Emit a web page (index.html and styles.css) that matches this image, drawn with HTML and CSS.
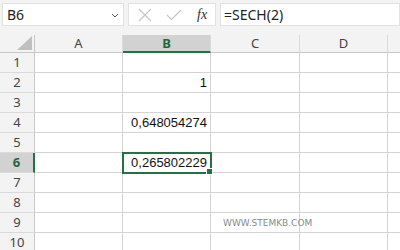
FILE: index.html
```html
<!DOCTYPE html>
<html lang="en">
<head>
    <meta charset="UTF-8">
    <title>SECH</title>
    <link rel="stylesheet" href="styles.css">
</head>
<body>
    <div class="formula-bar">
        <div class="name-box">
            <span>B6</span>
            <svg class="caret" width="8" height="5" viewBox="0 0 8 5"><path d="M1 1 L4 4 L7 1" fill="none" stroke="#555" stroke-width="1"/></svg>
        </div>
        <div class="fx-buttons">
            <svg width="14" height="14" viewBox="0 0 14 14"><path d="M1 1 L13 13 M13 1 L1 13" stroke="#c4c4c4" stroke-width="1.1" fill="none"/></svg>
            <svg width="16" height="12" viewBox="0 0 16 12"><path d="M1 6 L5.5 10.5 L15 1" stroke="#c4c4c4" stroke-width="1.1" fill="none"/></svg>
            <span class="fx">fx</span>
        </div>
        <div class="formula-input">=SECH(2)</div>
    </div>

    <div class="sheet">
        <div class="corner"><div class="tri"></div></div>
        <div class="col-head">A</div>
        <div class="col-head sel">B</div>
        <div class="col-head">C</div>
        <div class="col-head">D</div>
        <div class="col-head last"></div>

        <div class="row-head">1</div><div class="cell"></div><div class="cell"></div><div class="cell"></div><div class="cell"></div><div class="cell last"></div>
        <div class="row-head">2</div><div class="cell"></div><div class="cell num">1</div><div class="cell"></div><div class="cell"></div><div class="cell last"></div>
        <div class="row-head">3</div><div class="cell"></div><div class="cell"></div><div class="cell"></div><div class="cell"></div><div class="cell last"></div>
        <div class="row-head">4</div><div class="cell"></div><div class="cell num">0,648054274</div><div class="cell"></div><div class="cell"></div><div class="cell last"></div>
        <div class="row-head">5</div><div class="cell"></div><div class="cell"></div><div class="cell"></div><div class="cell"></div><div class="cell last"></div>
        <div class="row-head sel">6</div><div class="cell"></div><div class="cell num active">0,265802229<span class="handle"></span></div><div class="cell"></div><div class="cell"></div><div class="cell last"></div>
        <div class="row-head">7</div><div class="cell"></div><div class="cell"></div><div class="cell"></div><div class="cell"></div><div class="cell last"></div>
        <div class="row-head">8</div><div class="cell"></div><div class="cell"></div><div class="cell"></div><div class="cell"></div><div class="cell last"></div>
        <div class="row-head">9</div><div class="cell"></div><div class="cell"></div><div class="cell watermark">WWW.STEMKB.COM</div><div class="cell"></div><div class="cell last"></div>
        <div class="row-head">10</div><div class="cell"></div><div class="cell"></div><div class="cell"></div><div class="cell"></div><div class="cell last"></div>
    </div>
</body>
</html>
```

FILE: styles.css
```css
* {
    margin: 0;
    padding: 0;
    box-sizing: border-box;
}
body {
    width: 400px;
    height: 250px;
    overflow: hidden;
    background: #fff;
    font-family: "Noto Sans", "Open Sans", sans-serif;
}
.formula-bar {
    height: 35px;
    background: #f3f3f3;
    display: flex;
    gap: 4px;
    padding: 3px 0 9px 2px;
}
.name-box, .fx-buttons, .formula-input {
    background: #fff;
    border: 1px solid #e1e1e1;
    display: flex;
    align-items: center;
}
.name-box {
    width: 122px;
    justify-content: space-between;
    padding: 0 4px 0 4px;
    font-size: 14px;
    color: #222;
}
.name-box .caret {
    margin-top: 1px;
}
.fx-buttons {
    width: 88px;
    padding-left: 9px;
    gap: 14px;
}
.fx {
    font-family: "Liberation Serif", serif;
    font-style: italic;
    font-size: 14px;
    color: #333;
    margin-left: 1px;
}
.formula-input {
    flex: 1;
    padding-left: 3px;
    font-size: 14px;
    color: #222;
}
.sheet {
    display: grid;
    grid-template-columns: 35px 88px 88px 89px 88px 1fr;
    grid-template-rows: 18px repeat(10, 20px);
}
.corner {
    background: #f3f3f3;
    border-right: 1px solid #c8c8c8;
    border-bottom: 1px solid #c8c8c8;
    position: relative;
}
.tri {
    position: absolute;
    right: 2px;
    bottom: 2px;
    width: 0;
    height: 0;
    border-left: 15px solid transparent;
    border-bottom: 14px solid #c0c0c0;
}
.col-head {
    background: #f3f3f3;
    border-right: 1px solid #dadada;
    border-bottom: 1px solid #c8c8c8;
    font-size: 13px;
    color: #444;
    text-align: center;
    line-height: 17px;
}
.col-head.sel {
    background: #d2d2d2;
    border-bottom: 2px solid #217346;
    color: #1d6a3f;
    font-weight: bold;
}
.col-head.last, .cell.last {
    border-right: none;
}
.row-head {
    background: #f3f3f3;
    border-right: 1px solid #c8c8c8;
    border-bottom: 1px solid #dadada;
    font-size: 13px;
    color: #444;
    text-align: center;
    line-height: 19px;
}
.row-head.sel {
    background: #d2d2d2;
    border-right: 2px solid #217346;
    color: #1d6a3f;
    font-weight: bold;
}
.cell {
    border-right: 1px solid #d4d4d4;
    border-bottom: 1px solid #d4d4d4;
    font-family: "Liberation Sans", Arial, sans-serif;
    font-size: 13px;
    color: #111;
    line-height: 20px;
    white-space: nowrap;
}
.num {
    text-align: right;
    padding-right: 3px;
}
.active {
    position: relative;
    outline: 2px solid #217346;
    outline-offset: -1px;
    z-index: 1;
}
.handle {
    position: absolute;
    right: -3px;
    bottom: -3px;
    width: 5px;
    height: 5px;
    background: #217346;
    border: 1px solid #fff;
    box-sizing: content-box;
}
.watermark {
    font-family: "DejaVu Sans", Verdana, sans-serif;
    font-size: 9px;
    color: #8a8a8a;
    padding-left: 12px;
    line-height: 21px;
    overflow: visible;
}
```
